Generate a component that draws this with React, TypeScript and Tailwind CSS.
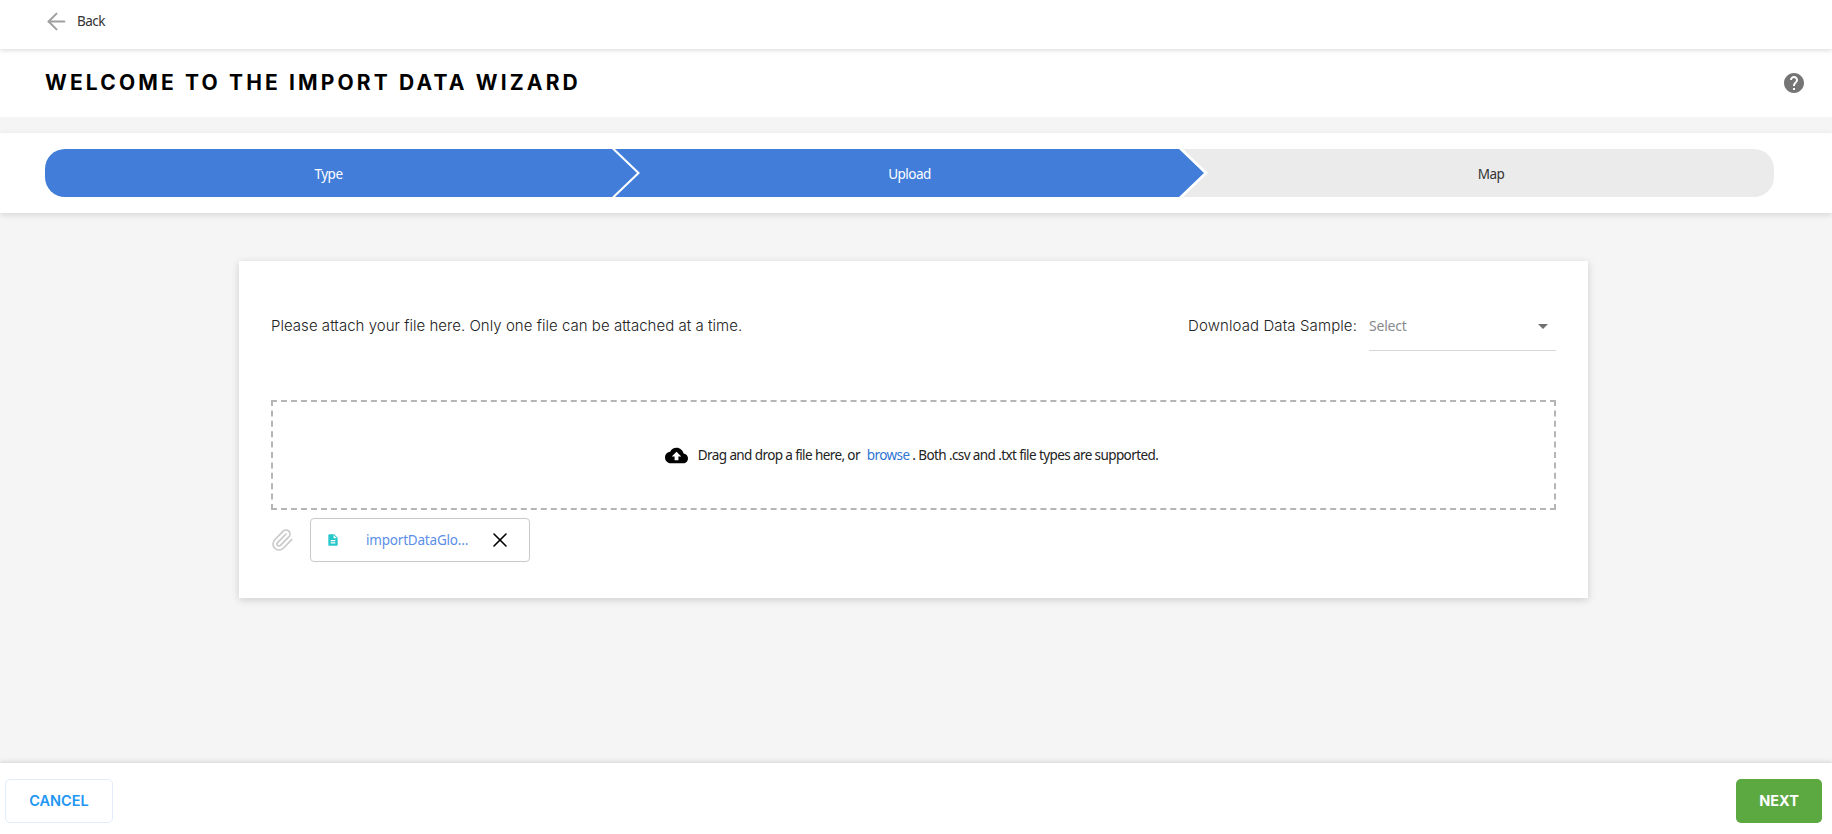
import React from 'react';
import { ArrowLeft, Paperclip, X } from 'lucide-react';

const sans = "font-['Noto_Sans',sans-serif]";
const head = "font-['Inter',sans-serif]";

const Steps: React.FC = () => (
  <div className="flex h-12 w-[1729px] overflow-hidden rounded-[20px] bg-white text-[13.5px] tracking-[-0.5px]">
    <div className="flex w-[592px] shrink-0 items-center justify-center bg-[#417dd9] pr-[25px] pt-[3px] text-white [clip-path:polygon(0_0,calc(100%-25px)_0,100%_50%,calc(100%-25px)_100%,0_100%)]">
      Type
    </div>
    <div className="-ml-[22px] flex w-[589px] shrink-0 items-center justify-center bg-[#417dd9] pt-[3px] text-white [clip-path:polygon(0_0,calc(100%-25px)_0,100%_50%,calc(100%-25px)_100%,0_100%,25px_50%)]">
      Upload
    </div>
    <div className="-ml-[21px] flex w-[591px] shrink-0 items-center justify-center bg-[#ebebeb] pl-[25px] pt-[3px] text-[#333] [clip-path:polygon(0_0,100%_0,100%_100%,0_100%,25px_50%)]">
      Map
    </div>
  </div>
);

export default function App() {
  return (
    <div className={`flex h-screen w-full flex-col overflow-hidden bg-[#f5f5f5] ${sans}`}>
      <header className="relative z-10 flex h-[49px] shrink-0 items-center bg-white pb-[6px] pl-[46px] shadow-[0_1px_5px_rgba(0,0,0,0.16)]">
        <ArrowLeft size={27} strokeWidth={1.8} className="-ml-[3px] text-[#a0a0a0]" />
        <span className="ml-[7px] text-[13.5px] tracking-[-0.5px] text-[#333]">Back</span>
      </header>

      <div className="flex h-[68px] shrink-0 items-center justify-between bg-white pl-[45px] pr-[26px]">
        <h1 className={`text-[21px] font-bold tracking-[3.15px] text-black ${head}`}>WELCOME TO THE IMPORT DATA WIZARD</h1>
        <svg width="24" height="24" viewBox="0 0 24 24" fill="#757575">
          <path d="M12 2C6.48 2 2 6.48 2 12s4.48 10 10 10 10-4.48 10-10S17.52 2 12 2zm1 17h-2v-2h2v2zm2.07-7.75l-.9.92C13.45 12.9 13 13.5 13 15h-2v-.5c0-1.1.45-2.1 1.17-2.83l1.24-1.26c.37-.36.59-.86.59-1.41 0-1.1-.9-2-2-2s-2 .9-2 2H8c0-2.21 1.79-4 4-4s4 1.79 4 4c0 .88-.36 1.68-.93 2.25z" />
        </svg>
      </div>

      <div className="relative z-[5] mt-4 flex h-20 shrink-0 items-center bg-white pl-[45px] shadow-[0_2px_6px_rgba(0,0,0,0.12)]">
        <Steps />
      </div>

      <main className="flex-1 pl-[239px] pt-12">
        <section className="w-[1349px] bg-white px-8 pb-9 pt-[42px] shadow-[0_2px_8px_rgba(0,0,0,0.16)]">
          <div className="flex h-[48px] items-center justify-between">
            <p className={`-mt-[1px] text-[15px] font-light tracking-[0.03px] text-[#222] ${head}`}>Please attach your file here. Only one file can be attached at a time.</p>
            <div className="flex h-full items-center">
              <span className={`-mt-[1px] text-[15px] font-light tracking-[0.1px] text-[#222] ${head}`}>Download Data Sample:</span>
              <div className="ml-3 flex h-full w-[187px] items-center justify-between border-b border-[#d6d6d6] pr-[8px] text-[14px] tracking-[-0.2px] text-[#8a8a8a]">
                <span className="-mt-[2px]">Select</span>
                <span className="h-0 w-0 border-x-[5px] border-t-[5px] border-x-transparent border-t-[#707070]" />
              </div>
            </div>
          </div>

          <div className="mt-[49px] flex h-[110px] items-center justify-center gap-[10px] border-2 border-dashed border-[#b5b5b5] pr-[4px]">
            <svg width="23" height="23" viewBox="0 0 24 24" fill="#000">
              <path d="M19.35 10.04C18.67 6.59 15.64 4 12 4 9.11 4 6.6 5.64 5.35 8.04 2.34 8.36 0 10.91 0 14c0 3.31 2.69 6 6 6h13c2.76 0 5-2.24 5-5 0-2.64-2.05-4.78-4.65-4.96zM14 13v4h-4v-4H7l5-5 5 5h-3z" />
            </svg>
            <p className="text-[13.5px] tracking-[-0.6px] text-[#222]">
              Drag and drop a file here, or <a className="ml-1 text-[#2f76d2]">browse</a> . Both .csv and .txt file types are supported.
            </p>
          </div>

          <div className="mt-2 flex items-center">
            <Paperclip size={24} strokeWidth={1.6} className="-ml-[1px] text-[#c8c8c8]" />
            <div className="ml-4 flex h-11 w-[220px] items-center rounded border border-[#c9c9c9] pl-[15px]">
              <svg width="14" height="14" viewBox="0 0 24 24" fill="#26c6ca">
                <path d="M14 2H6c-1.1 0-1.99.9-1.99 2L4 20c0 1.1.89 2 1.99 2H18c1.1 0 2-.9 2-2V8l-6-6zm2 16H8v-2h8v2zm0-4H8v-2h8v2zm-3-5V3.5L18.5 9H13z" />
              </svg>
              <span className="ml-[26px] w-[102px] text-[13.5px] tracking-[-0.2px] text-[#5b8fe8]">importDataGlo…</span>
              <X size={24} strokeWidth={1.6} className="ml-5 text-black" />
            </div>
          </div>
        </section>
      </main>

      <footer className={`relative z-10 flex h-[71px] shrink-0 items-start justify-between bg-white pl-[5px] pr-[10px] pt-4 text-[14.5px] shadow-[0_-1px_5px_rgba(0,0,0,0.14)] ${head}`}>
        <button className="h-11 w-[108px] rounded-[5px] border border-[#e1ecfb] font-semibold text-[#2196f3]">CANCEL</button>
        <button className="h-11 w-[86px] rounded-[5px] bg-[#5ca941] font-bold text-white">NEXT</button>
      </footer>
    </div>
  );
}
